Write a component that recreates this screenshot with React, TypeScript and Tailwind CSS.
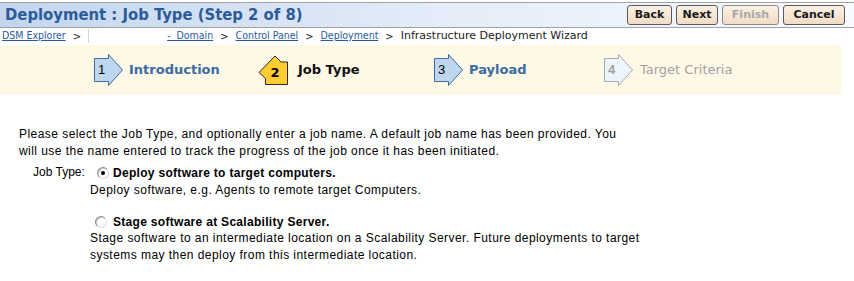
import React from "react";

const verdana = { fontFamily: '"DejaVu Sans", Verdana, sans-serif' };

function StepArrow({ n, muted }: { n: number; muted?: boolean }) {
  return (
    <div className="relative w-[30px] h-[32px] shrink-0">
      <svg width="30" height="32" viewBox="0 0 30 32">
        <polygon
          points="0.5,4.5 14.5,4.5 14.5,0.5 28.5,16 14.5,31.5 14.5,27.5 0.5,27.5"
          fill={muted ? "#eef4fc" : "#bed7ef"}
          stroke={muted ? "#a3abb5" : "#3d6aa0"}
        />
      </svg>
      <span
        className={
          "absolute left-0 top-0 w-[15px] h-[32px] flex items-center justify-center text-[13px] " +
          (muted ? "font-bold text-[#a0a0a0]" : "text-black")
        }
        style={{ fontFamily: '"Liberation Sans", Arial, sans-serif' }}
      >
        {n}
      </span>
    </div>
  );
}

function CurrentArrow() {
  return (
    <div className="relative w-[31px] h-[31px] shrink-0 -ml-[6px]">
      <svg width="31" height="31" viewBox="0 0 31 31">
        <polygon
          points="1,17.5 17,1 23,7 29.5,7 29.5,29.5 7.5,29.5 7.5,23.5"
          fill="#ffcc33"
          stroke="#2a2a2a"
        />
      </svg>
      <span
        className="absolute left-[10px] top-[10px] w-[14px] h-[16px] flex items-center justify-center text-[13px] font-bold text-black"
        style={verdana}
      >
        2
      </span>
    </div>
  );
}

function Radio({ checked }: { checked?: boolean }) {
  return (
    <span className="w-[12px] h-[12px] rounded-full border border-t-[#8c8c8c] border-l-[#8c8c8c] border-r-[#dcdcdc] border-b-[#dcdcdc] bg-white flex items-center justify-center shrink-0 shadow-[inset_1px_1px_0_#c4c4c4]">
      {checked && <span className="w-[4px] h-[4px] rounded-full bg-black" />}
    </span>
  );
}

const Sep = () => (
  <span className="mx-[7px] text-[10px] text-[#222]" style={verdana}>
    &gt;
  </span>
);

export default function App() {
  const btn =
    "h-[20px] rounded-[3px] border border-[#5a5a5a] bg-gradient-to-b from-[#fbf1e4] to-[#f1dcc4] text-[11px] font-bold flex items-center justify-center";
  const link = "text-[#2b5b9e] underline text-[10.5px]";
  const linkFont = { fontFamily: '"DejaVu Sans Condensed", "DejaVu Sans", Tahoma, sans-serif' };

  return (
    <div className="w-[854px] h-[281px] bg-white overflow-hidden">
      {/* title bar */}
      <div className="mt-[2px] h-[26px] border-t border-b border-[#a2a2a2] bg-gradient-to-r from-[#c3d5ee] via-[#e3ecf8] to-[#f8fbff] flex items-center justify-between pl-[5px] pr-[9px]">
        <h1
          className="text-[16.5px] font-bold text-[#2c5c98] leading-none"
          style={{ fontFamily: '"DejaVu Sans Condensed", "DejaVu Sans", Tahoma, sans-serif' }}
        >
          Deployment : Job Type (Step 2 of 8)
        </h1>
        <div className="flex gap-[4px]" style={verdana}>
          <button className={btn + " w-[45px] text-[#1a1a1a]"}>Back</button>
          <button className={btn + " w-[42px] text-[#1a1a1a]"}>Next</button>
          <button className={btn + " w-[57px] text-[#a8a8a8] border-[#8a8a8a]"}>Finish</button>
          <button className={btn + " w-[62px] text-[#1a1a1a]"}>Cancel</button>
        </div>
      </div>

      {/* breadcrumb */}
      <div className="h-[16px] flex items-center pl-[2px]">
        <a className={link} style={linkFont}>DSM Explorer</a>
        <Sep />
        <span className="w-[79px] h-[14px] border-l border-[#d8d8d8]" />
        <a className={link} style={linkFont}>-&nbsp; Domain</a>
        <Sep />
        <a className={link} style={linkFont}>Control Panel</a>
        <Sep />
        <a className={link} style={linkFont}>Deployment</a>
        <Sep />
        <span className="text-[11px] text-[#1a1a1a]" style={verdana}>
          Infrastructure Deployment Wizard
        </span>
      </div>

      {/* wizard steps */}
      <div className="mt-[1px] w-[841px] h-[50px] bg-[#fef9e6] flex items-center pl-[94px]" style={verdana}>
        <div className="w-[170px] flex items-center gap-[5px]">
          <StepArrow n={1} />
          <span className="text-[13px] font-bold text-[#3a6ba3]">Introduction</span>
        </div>
        <div className="w-[170px] flex items-center gap-[9px]">
          <CurrentArrow />
          <span className="text-[13px] font-bold text-[#111]">Job Type</span>
        </div>
        <div className="w-[170px] flex items-center gap-[5px]">
          <StepArrow n={3} />
          <span className="text-[13px] font-bold text-[#3a6ba3]">Payload</span>
        </div>
        <div className="w-[170px] flex items-center gap-[6px]">
          <StepArrow n={4} muted />
          <span className="text-[13px] text-[#a2a2a2]">Target Criteria</span>
        </div>
      </div>

      {/* body */}
      <div
        className="pl-[19px] pt-[31px] text-[12px] leading-[17px] tracking-[0.45px] text-black"
        style={{ fontFamily: '"Liberation Sans", Arial, sans-serif' }}
      >
        <p>
          Please select the Job Type, and optionally enter a job name. A default job name has been provided. You
          <br />
          will use the name entered to track the progress of the job once it has been initiated.
        </p>

        <div className="flex mt-[4px]">
          <div className="w-[71px] pl-[14px] shrink-0 tracking-normal">Job Type:</div>
          <div className="flex flex-col">
            <div className="flex items-center h-[18px] pl-[7px] gap-[4px]">
              <Radio checked />
              <span className="font-bold tracking-[0.3px]">Deploy software to target computers.</span>
            </div>
            <div>Deploy software, e.g. Agents to remote target Computers.</div>

            <div className="flex items-center h-[18px] pl-[5px] gap-[6px] mt-[14px]">
              <Radio />
              <span className="font-bold tracking-[0.3px]">Stage software at Scalability Server.</span>
            </div>
            <div className="-mt-[1px]">
              Stage software to an intermediate location on a Scalability Server. Future deployments to target
              <br />
              systems may then deploy from this intermediate location.
            </div>
          </div>
        </div>
      </div>
    </div>
  );
}
